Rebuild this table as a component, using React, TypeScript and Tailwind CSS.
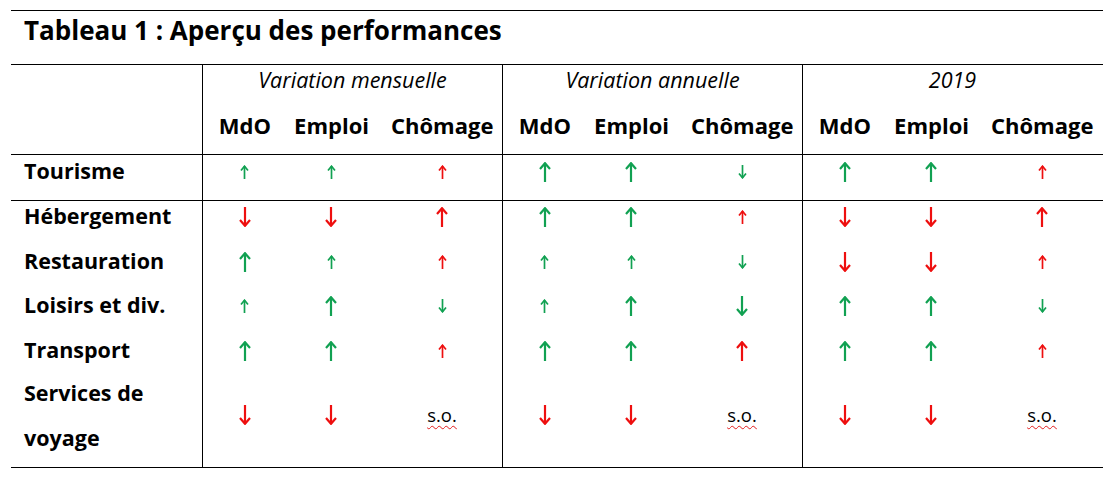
type Dir = 'up' | 'down';
type Cell = { dir: Dir; big: boolean; green: boolean } | 'so';

const GREEN = '#11a152';
const RED = '#ee0f0f';

const u = (big: boolean, green: boolean): Cell => ({ dir: 'up', big, green });
const d = (big: boolean, green: boolean): Cell => ({ dir: 'down', big, green });

const GROUPS = ['Variation mensuelle', 'Variation annuelle', '2019'];
const SUBS = ['MdO', 'Emploi', 'Chômage'];

const ROWS: { label: string; cells: Cell[] }[] = [
  {
    label: 'Hébergement',
    cells: [d(true, false), d(true, false), u(true, false), u(true, true), u(true, true), u(false, false), d(true, false), d(true, false), u(true, false)],
  },
  {
    label: 'Restauration',
    cells: [u(true, true), u(false, true), u(false, false), u(false, true), u(false, true), d(false, true), d(true, false), d(true, false), u(false, false)],
  },
  {
    label: 'Loisirs et div.',
    cells: [u(false, true), u(true, true), d(false, true), u(false, true), u(true, true), d(true, true), u(true, true), u(true, true), d(false, true)],
  },
  {
    label: 'Transport',
    cells: [u(true, true), u(true, true), u(false, false), u(true, true), u(true, true), u(true, false), u(true, true), u(true, true), u(false, false)],
  },
];

const TOURISME: Cell[] = [u(false, true), u(false, true), u(false, false), u(true, true), u(true, true), d(false, true), u(true, true), u(true, true), u(false, false)];
const SERVICES: Cell[] = [d(true, false), d(true, false), 'so', d(true, false), d(true, false), 'so', d(true, false), d(true, false), 'so'];

const SUB_COLS = ['w-[84px]', 'w-[90px]', 'w-[126px] pl-[6px]'];

function Arrow({ dir, big, green }: { dir: Dir; big: boolean; green: boolean }) {
  const w = big ? 12 : 9;
  const h = big ? 20 : 14;
  const head = big ? 6 : 4.5;
  const c = w / 2;
  const line = dir === 'up' ? `M${c} 1 V${h}` : `M${c} 0 V${h - 1}`;
  const chevron =
    dir === 'up'
      ? `M1 ${head + 1} L${c} 1.2 L${w - 1} ${head + 1}`
      : `M1 ${h - head - 1} L${c} ${h - 1.2} L${w - 1} ${h - head - 1}`;
  return (
    <svg width={w} height={h} viewBox={`0 0 ${w} ${h}`} fill="none" stroke={green ? GREEN : RED} strokeWidth={big ? 2.2 : 1.7}>
      <path d={line} />
      <path d={chevron} strokeLinejoin="miter" />
    </svg>
  );
}

function Row({ label, cells, lineH, height, arrowBox }: { label: React.ReactNode; cells: Cell[]; lineH: string; height: string; arrowBox: string }) {
  return (
    <div className={`flex ${height}`}>
      <div className={`w-[191px] shrink-0 pl-[13px] text-[21.5px] font-bold ${lineH}`}>{label}</div>
      {cells.map((cell, i) => (
        <div key={i} className={`flex ${SUB_COLS[i % 3]} ${i % 3 === 0 ? 'border-l border-black' : ''} justify-center`}>
          <div className={`flex items-center justify-center ${arrowBox}`}>
            {cell === 'so' ? (
              <span className="text-[18.5px] underline decoration-wavy decoration-[#e21b1b] decoration-1 underline-offset-[3px]">s.o.</span>
            ) : (
              <Arrow {...cell} />
            )}
          </div>
        </div>
      ))}
    </div>
  );
}

export default function App() {
  return (
    <div className="min-h-[479px] bg-white pl-[11px] pt-[10px] text-black [font-family:'Open_Sans',sans-serif]">
      <div className="w-[1092px] border-t border-black">
        <div className="h-[54px] border-b border-black pl-[13px] pt-[1px] text-[26px] font-bold leading-[36px]">
          Tableau 1 : Aperçu des performances
        </div>

        <div className="flex border-b border-black">
          <div className="w-[191px] shrink-0" />
          {GROUPS.map((g) => (
            <div key={g} className="w-[300px] border-l border-black">
              <div className="h-[34px] text-center text-[21.5px] italic leading-[30px]">{g}</div>
              <div className="flex h-[55px] items-center pb-[2px]">
                {SUBS.map((s, i) => (
                  <div key={s} className={`${SUB_COLS[i]} text-center text-[22px] font-bold`}>
                    {s}
                  </div>
                ))}
              </div>
            </div>
          ))}
        </div>

        <div className="border-b border-black">
          <Row label="Tourisme" cells={TOURISME} lineH="leading-[31px]" height="h-[45px]" arrowBox="h-[34px]" />
        </div>

        <div className="border-b border-black">
          {ROWS.map((r) => (
            <Row key={r.label} label={r.label} cells={r.cells} lineH="leading-[29px]" height="h-[44.5px]" arrowBox="h-[32px]" />
          ))}
          <Row
            label={
              <div className="-mt-[8px] leading-[44.5px]">
                Services de
                <br />
                voyage
              </div>
            }
            cells={SERVICES}
            lineH=""
            height="h-[88px]"
            arrowBox="h-[72px]"
          />
        </div>
      </div>
    </div>
  );
}
